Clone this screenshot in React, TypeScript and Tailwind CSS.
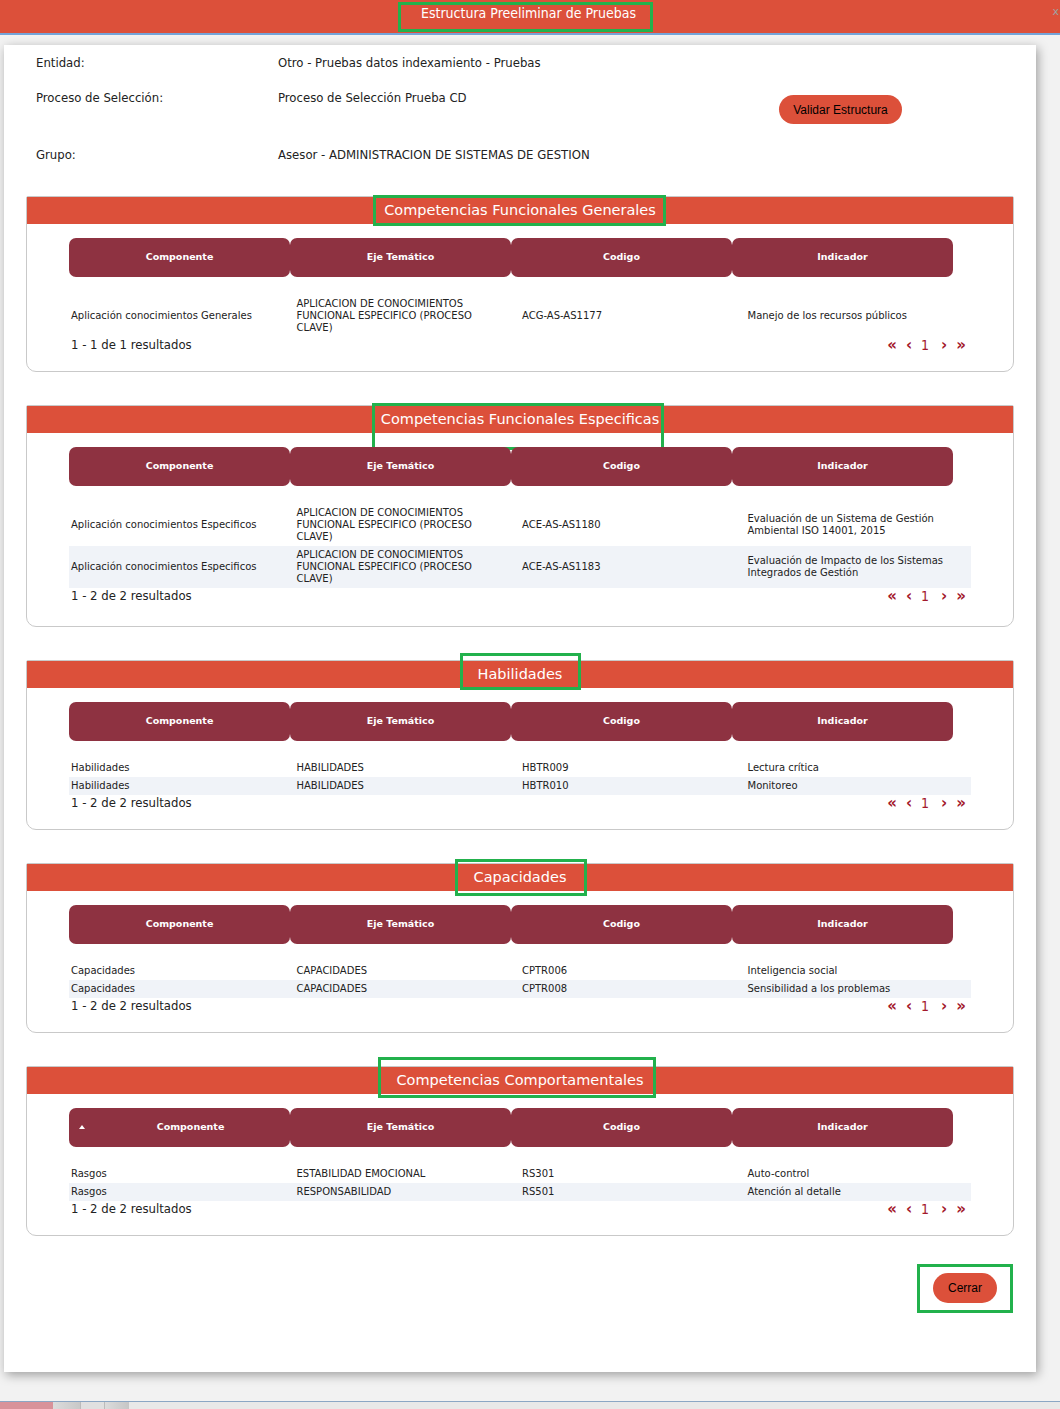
import React from "react";

type Section = {
  title: string;
  box: string;
  rows: string[][];
  total: string;
  sorted?: boolean;
  pad?: string;
};

const SECTIONS: Section[] = [
  {
    title: "Competencias Funcionales Generales",
    box: "-left-[11px] -right-[10px] -top-[2px] -bottom-[2px]",
    rows: [
      [
        "Aplicación conocimientos Generales",
        "APLICACION DE CONOCIMIENTOS FUNCIONAL ESPECIFICO (PROCESO CLAVE)",
        "ACG-AS-AS1177",
        "Manejo de los recursos públicos",
      ],
    ],
    total: "1 - 1 de 1 resultados",
  },
  {
    title: "Competencias Funcionales Especificas",
    box: "-left-[9px] -right-[5px] -top-[3px] -bottom-[17px]",
    rows: [
      [
        "Aplicación conocimientos Especificos",
        "APLICACION DE CONOCIMIENTOS FUNCIONAL ESPECIFICO (PROCESO CLAVE)",
        "ACE-AS-AS1180",
        "Evaluación de un Sistema de Gestión Ambiental ISO 14001, 2015",
      ],
      [
        "Aplicación conocimientos Especificos",
        "APLICACION DE CONOCIMIENTOS FUNCIONAL ESPECIFICO (PROCESO CLAVE)",
        "ACE-AS-AS1183",
        "Evaluación de Impacto de los Sistemas Integrados de Gestión",
      ],
    ],
    total: "1 - 2 de 2 resultados",
    pad: "pb-[22px]",
  },
  {
    title: "Habilidades",
    box: "-left-[18px] -right-[19px] -top-[8px] -bottom-[2px]",
    rows: [
      ["Habilidades", "HABILIDADES", "HBTR009", "Lectura crítica"],
      ["Habilidades", "HABILIDADES", "HBTR010", "Monitoreo"],
    ],
    total: "1 - 2 de 2 resultados",
  },
  {
    title: "Capacidades",
    box: "-left-[19px] -right-[21px] -top-[5px] -bottom-[5px]",
    rows: [
      ["Capacidades", "CAPACIDADES", "CPTR006", "Inteligencia social"],
      ["Capacidades", "CAPACIDADES", "CPTR008", "Sensibilidad a los problemas"],
    ],
    total: "1 - 2 de 2 resultados",
  },
  {
    title: "Competencias Comportamentales",
    box: "-left-[18px] -right-[12px] -top-[10px] -bottom-[4px]",
    rows: [
      ["Rasgos", "ESTABILIDAD EMOCIONAL", "RS301", "Auto-control"],
      ["Rasgos", "RESPONSABILIDAD", "RS501", "Atención al detalle"],
    ],
    total: "1 - 2 de 2 resultados",
    sorted: true,
  },
];

const HEADERS = ["Componente", "Eje Temático", "Codigo", "Indicador"];

function Pager() {
  return (
    <div className="flex items-center text-[#a3182b] font-['DejaVu_Sans',sans-serif] pr-[5px]">
      <span className="text-[15px] font-bold leading-none">«</span>
      <span className="ml-[9px] text-[15px] font-bold leading-none">‹</span>
      <span className="ml-[9px] text-[14px] leading-none font-['DejaVu_Sans_Condensed','DejaVu_Sans',sans-serif]">1</span>
      <span className="ml-[12px] text-[15px] font-bold leading-none">›</span>
      <span className="ml-[9px] text-[15px] font-bold leading-none">»</span>
    </div>
  );
}

function SectionCard({ section }: { section: Section }) {
  return (
    <div className={`w-[988px] border border-[#c9c9c9] rounded-b-[10px] rounded-t-[2px] ${section.pad ?? "pb-[18px]"}`}>
      {/* band */}
      <div className="h-[27px] bg-[#dc503a] flex justify-center">
        <span className="relative h-[27px] leading-[27px] text-white text-[14.5px] font-['DejaVu_Sans',sans-serif]">
          {section.title}
          <span className={`absolute border-[3px] border-[#22b14c] ${section.box}`} />
        </span>
      </div>

      <div className="ml-[42px] mt-[14px]">
        {/* table header */}
        <div className="grid grid-cols-4 w-[884px] h-[39px]">
          {HEADERS.map((h, i) => (
            <div
              key={h}
              className="relative bg-[#8e3241] rounded-[7px] flex items-center justify-center text-white text-[9.5px] font-bold font-['DejaVu_Sans',sans-serif]"
            >
              {section.sorted && i === 0 ? (
                <>
                  <span className="absolute left-[10px] top-[17px] w-0 h-0 border-l-[3px] border-r-[3px] border-b-[4px] border-l-transparent border-r-transparent border-b-white" />
                  <span className="pl-[22px]">{h}</span>
                </>
              ) : (
                h
              )}
            </div>
          ))}
        </div>

        {/* rows */}
        <div className="w-[902px] mt-[18px] font-['DejaVu_Sans',sans-serif] text-[10px] leading-[12px] text-[#222]">
          {section.rows.map((r, idx) => (
            <div
              key={idx}
              className={`grid grid-cols-4 items-center py-[3px] ${idx % 2 === 1 ? "bg-[#f0f3f8]" : ""}`}
            >
              {r.map((c, j) => (
                <div key={j} className="pl-[2px] pr-[10px]">
                  {c}
                </div>
              ))}
            </div>
          ))}
        </div>

        <div className="w-[902px] h-[16px] flex items-center justify-between">
          <span className="pl-[2px] text-[13px] text-[#222] font-['DejaVu_Sans_Condensed','DejaVu_Sans',sans-serif]">
            {section.total}
          </span>
          <Pager />
        </div>
      </div>
    </div>
  );
}

export default function App() {
  return (
    <div className="w-[1060px] h-[1409px] bg-[#f2f2f2] flex flex-col overflow-hidden">
      {/* top bar */}
      <div className="relative h-[35px] shrink-0 bg-[#dc503a] border-b-2 border-[#74a4d9] flex justify-center">
        <div className="mt-[2px] mr-[9px] h-[30px] border-[3px] border-[#22b14c] pl-[20px] pr-[14px]">
          <span className="block text-white text-[14px] leading-[16px] font-['DejaVu_Sans_Condensed','DejaVu_Sans',sans-serif]">
            Estructura Preeliminar de Pruebas
          </span>
        </div>
        <span className="absolute right-[1px] top-[4px] text-[#a0a0a0] text-[11px] font-['DejaVu_Sans',sans-serif]">
          x
        </span>
      </div>

      {/* modal */}
      <div className="mt-[10px] ml-[4px] w-[1032px] h-[1327px] shrink-0 bg-white shadow-[2px_3px_10px_rgba(0,0,0,0.35)] flex flex-col">
        <div className="flex pl-[32px] text-[13px] text-[#222] font-['DejaVu_Sans_Condensed','DejaVu_Sans',sans-serif]">
          <div className="w-[743px]">
            <div className="h-[35px] flex items-center">
              <span className="w-[242px]">Entidad:</span>
              <span>Otro - Pruebas datos indexamiento - Pruebas</span>
            </div>
            <div className="h-[36px] flex items-center">
              <span className="w-[242px]">Proceso de Selección:</span>
              <span>Proceso de Selección Prueba CD</span>
            </div>
            <div className="h-[21px]" />
            <div className="h-[36px] flex items-center">
              <span className="w-[242px]">Grupo:</span>
              <span>Asesor - ADMINISTRACION DE SISTEMAS DE GESTION</span>
            </div>
          </div>
          <button className="mt-[50px] w-[123px] h-[29px] rounded-full bg-[#dc503a] text-black text-[12px] font-['Liberation_Sans',Arial,sans-serif]">
            Validar Estructura
          </button>
        </div>

        <div className="ml-[22px] mt-[23px] flex flex-col gap-[33px]">
          {SECTIONS.map((s) => (
            <SectionCard key={s.title} section={s} />
          ))}
        </div>

        <div className="flex justify-end mr-[23px] mt-[28px]">
          <div className="border-[3px] border-[#22b14c] px-[13px] pt-[6px] pb-[7px]">
            <button className="w-[64px] h-[30px] rounded-full bg-[#dc503a] text-black text-[12px] font-['Liberation_Sans',Arial,sans-serif]">
              Cerrar
            </button>
          </div>
        </div>
      </div>

      <div className="flex-1" />
      <div className="h-[1px] bg-[#8aa6c4] shrink-0" />
      <div className="h-[7px] shrink-0 flex">
        <div className="w-[53px] bg-[#d8929a]" />
        <div className="w-[27px] bg-gradient-to-r from-[#dcdcdc] to-[#c8c8c8]" />
        <div className="w-[1px] bg-[#bbb]" />
        <div className="w-[23px] bg-[#e0e0e0]" />
        <div className="w-[1px] bg-[#bbb]" />
        <div className="w-[24px] bg-gradient-to-r from-[#dcdcdc] to-[#c6c6c6]" />
        <div className="flex-1 bg-[#e8e8e8]" />
      </div>
    </div>
  );
}
